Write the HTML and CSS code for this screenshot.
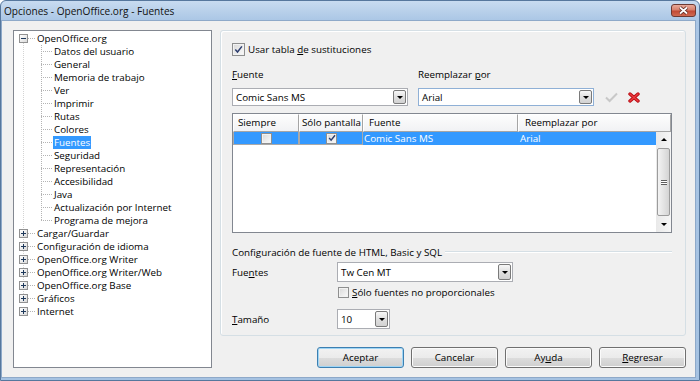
FILE: index.html
```html
<!DOCTYPE html>
<html lang="es">
<head>
    <meta charset="UTF-8">
    <title>Opciones - OpenOffice.org - Fuentes</title>
    <link rel="stylesheet" href="styles.css">
</head>
<body>
    <div class="window">
        <div class="titlebar">
            <span class="title">Opciones - OpenOffice.org - Fuentes</span>
            <span class="close-btn">
                <svg width="11" height="9" viewBox="0 0 11 9"><path d="M2 1.5 L9 7.5 M9 1.5 L2 7.5" stroke="#5a2620" stroke-width="3.4"/><path d="M2 1.5 L9 7.5 M9 1.5 L2 7.5" stroke="#fff" stroke-width="1.7"/></svg>
            </span>
        </div>
        <div class="frame">
            <div class="client">
                <!-- arbol de categorias -->
                <div class="tree">
                    <ul class="tree-list">
                        <li class="node">
                            <div class="node-row"><span class="expander"><span class="sign"></span></span><span class="node-label">OpenOffice.org</span></div>
                            <ul class="children">
                                <li class="child"><span class="node-label">Datos del usuario</span></li>
                                <li class="child"><span class="node-label">General</span></li>
                                <li class="child"><span class="node-label">Memoria de trabajo</span></li>
                                <li class="child"><span class="node-label">Ver</span></li>
                                <li class="child"><span class="node-label">Imprimir</span></li>
                                <li class="child"><span class="node-label">Rutas</span></li>
                                <li class="child"><span class="node-label">Colores</span></li>
                                <li class="child"><span class="node-label selected">Fuentes</span></li>
                                <li class="child"><span class="node-label">Seguridad</span></li>
                                <li class="child"><span class="node-label">Representación</span></li>
                                <li class="child"><span class="node-label">Accesibilidad</span></li>
                                <li class="child"><span class="node-label">Java</span></li>
                                <li class="child"><span class="node-label">Actualización por Internet</span></li>
                                <li class="child"><span class="node-label">Programa de mejora</span></li>
                            </ul>
                        </li>
                        <li class="node"><div class="node-row"><span class="expander"><span class="sign plus"></span></span><span class="node-label">Cargar/Guardar</span></div></li>
                        <li class="node"><div class="node-row"><span class="expander"><span class="sign plus"></span></span><span class="node-label">Configuración de idioma</span></div></li>
                        <li class="node"><div class="node-row"><span class="expander"><span class="sign plus"></span></span><span class="node-label">OpenOffice.org Writer</span></div></li>
                        <li class="node"><div class="node-row"><span class="expander"><span class="sign plus"></span></span><span class="node-label">OpenOffice.org Writer/Web</span></div></li>
                        <li class="node"><div class="node-row"><span class="expander"><span class="sign plus"></span></span><span class="node-label">OpenOffice.org Base</span></div></li>
                        <li class="node"><div class="node-row"><span class="expander"><span class="sign plus"></span></span><span class="node-label">Gráficos</span></div></li>
                        <li class="node"><div class="node-row"><span class="expander"><span class="sign plus"></span></span><span class="node-label">Internet</span></div></li>
                    </ul>
                </div>

                <div class="main">
                    <div class="group">
                        <div class="check-row">
                            <span class="checkbox checked"><svg width="9" height="9" viewBox="0 0 9 9"><path d="M1.3 4.6 L3.5 7 L7.9 1.4" fill="none" stroke="#2c3d6e" stroke-width="1.5"/></svg></span>
                            <span>Usar tabla <u>d</u>e sustituciones</span>
                        </div>

                        <div class="field-labels">
                            <span class="col-label"><u>F</u>uente</span>
                            <span class="col-label">Reemplazar <u>p</u>or</span>
                        </div>

                        <div class="combo-row">
                            <div class="combo wide"><span class="combo-text">Comic Sans MS</span><span class="combo-btn"><span class="arrow-down"></span></span></div>
                            <div class="combo wide focused"><span class="combo-text">Arial</span><span class="combo-btn"><span class="arrow-down"></span></span></div>
                            <span class="tool-icon apply">
                                <svg width="13" height="11" viewBox="0 0 13 11"><path d="M1 5.5 L4.6 9 L12 1.5" fill="none" stroke="#c8c8c8" stroke-width="2"/></svg>
                            </span>
                            <span class="tool-icon">
                                <svg width="12" height="11" viewBox="0 0 12 11"><path d="M2 2 L10 9 M10 2 L2 9" stroke="#b80d14" stroke-width="3.4" stroke-linecap="round"/><path d="M2 2 L10 9 M10 2 L2 9" stroke="#ee3b3f" stroke-width="1.5" stroke-linecap="round"/></svg>
                            </span>
                        </div>

                        <div class="table">
                            <div class="thead">
                                <div class="th c1">Siempre</div>
                                <div class="th c2">Sólo pantalla</div>
                                <div class="th c3">Fuente</div>
                                <div class="th c4">Reemplazar por</div>
                            </div>
                            <div class="tbody">
                                <div class="rows">
                                    <div class="tr selected">
                                        <div class="td c1 boxed"><span class="checkbox small"></span></div>
                                        <div class="td c2 boxed"><span class="checkbox small checked"><svg width="8" height="8" viewBox="0 0 9 9"><path d="M1.3 4.6 L3.5 7 L7.9 1.4" fill="none" stroke="#2c3d6e" stroke-width="1.6"/></svg></span></div>
                                        <div class="td c3">Comic Sans MS</div>
                                        <div class="td c4">Arial</div>
                                    </div>
                                </div>
                                <div class="vscroll">
                                    <span class="sb-btn"><span class="arrow-up"></span></span>
                                    <span class="sb-thumb"><span class="grip"></span></span>
                                    <span class="sb-btn"><span class="arrow-down"></span></span>
                                </div>
                            </div>
                        </div>

                        <div class="section-title">
                            <span>Configuración de fuente de HTML, Basic y SQL</span>
                            <span class="rule"></span>
                        </div>

                        <div class="form-row first">
                            <span class="form-label">Fue<u>n</u>tes</span>
                            <div class="combo tall"><span class="combo-text">Tw Cen MT</span><span class="combo-btn"><span class="arrow-down"></span></span></div>
                        </div>
                        <div class="check-row indent">
                            <span class="checkbox mid"></span>
                            <span><u>S</u>ólo fuentes no proporcionales</span>
                        </div>
                        <div class="form-row size-row">
                            <span class="form-label"><u>T</u>amaño</span>
                            <div class="combo tall narrow"><span class="combo-text">10</span><span class="combo-btn"><span class="arrow-down"></span></span></div>
                        </div>
                    </div>

                    <div class="buttons">
                        <button class="btn default">Aceptar</button>
                        <button class="btn">Cancelar</button>
                        <button class="btn">Ay<u>u</u>da</button>
                        <button class="btn"><u>R</u>egresar</button>
                    </div>
                </div>
            </div>
        </div>
    </div>
</body>
</html>
```

FILE: styles.css
```css
/* reset */
* {
    margin: 0;
    padding: 0;
    box-sizing: border-box;
}

body {
    font-family: "Open Sans", "Noto Sans", sans-serif;
    font-size: 9.8px;
    line-height: 13px;
    color: #000;
    background: #fff;
    overflow: hidden;
}

ul {
    list-style: none;
}

u {
    text-decoration: underline;
    text-underline-offset: 1px;
}

/* ventana */
.window {
    width: 700px;
    height: 381px;
    display: flex;
    flex-direction: column;
    border: 1px solid #56779d;
    border-radius: 6px 6px 0 0;
    background: linear-gradient(#c8dbf0, #aac6e5 20px, #a5c2e2);
}

.titlebar {
    height: 20px;
    display: flex;
    justify-content: space-between;
    align-items: flex-start;
    padding: 0 3px 0 3px;
}

.title {
    margin-top: 3px;
    line-height: 15px;
    font-size: 10.1px;
    color: #111;
}

.close-btn {
    margin-top: 3px;
    width: 25px;
    height: 13px;
    display: flex;
    align-items: center;
    justify-content: center;
    border: 1px solid #6d3a33;
    border-radius: 3px;
    background: linear-gradient(#e9aa9a, #d7806c 45%, #c24a35 55%, #cf6a52);
}

.frame {
    flex: 1;
    display: flex;
    padding: 0 4px 3px 1px;
}

.client {
    flex: 1;
    display: flex;
    gap: 8px;
    padding: 9px 9px 0 11px;
    background: #f0f0f0;
    box-shadow: 0 0 0 1px #8ea9c9;
}

/* arbol */
.tree {
    width: 199px;
    height: 338px;
    padding-top: 1px;
    background: #fff;
    border: 1px solid #828790;
}

.tree-list {
    background: repeating-linear-gradient(to bottom, #d4d4d4 0 1px, transparent 1px 2px) 9px 7px / 1px 260px no-repeat;
}

.node-row {
    display: flex;
    align-items: center;
    height: 13px;
    padding-left: 5px;
    white-space: nowrap;
    background: repeating-linear-gradient(to right, #b4b4b4 0 1px, transparent 1px 2px) 14px 6px / 7px 1px no-repeat;
}

.expander {
    width: 9px;
    height: 9px;
    margin-right: 8px;
    display: flex;
    align-items: center;
    justify-content: center;
    border: 1px solid #919191;
    background: linear-gradient(135deg, #fff, #dadada);
}

.sign {
    width: 5px;
    height: 1px;
    background: #1e395b;
}

.sign.plus {
    background:
        linear-gradient(#1e395b, #1e395b) center / 1px 5px no-repeat,
        linear-gradient(#1e395b, #1e395b) center / 5px 1px no-repeat;
    height: 5px;
}

.node-label {
    padding: 0 1px;
    line-height: 13px;
}

.node-label.selected {
    background: #3399ff;
    color: #fff;
}

.children {
    background: repeating-linear-gradient(to bottom, #b4b4b4 0 1px, transparent 1px 2px) 27px 0 / 1px calc(100% - 6px) no-repeat;
}

.child {
    height: 13px;
    padding-left: 39px;
    white-space: nowrap;
    background: repeating-linear-gradient(to right, #b4b4b4 0 1px, transparent 1px 2px) 27px 6px / 12px 1px no-repeat;
}

/* panel derecho */
.main {
    width: 466px;
    display: flex;
    flex-direction: column;
}

.group {
    height: 306px;
    display: flex;
    flex-direction: column;
    padding: 11px 13px 0 11px;
    border: 1px solid #d5dfe5;
    border-radius: 3px;
    box-shadow: inset 1px 1px 0 #fff;
}

.check-row {
    display: flex;
    align-items: center;
    gap: 3px;
    height: 14px;
}

.check-row.indent {
    margin-top: 3px;
    padding-left: 106px;
}

.checkbox {
    flex: none;
    width: 13px;
    height: 13px;
    display: flex;
    align-items: center;
    justify-content: center;
    border: 1px solid #8e8f8f;
    background: linear-gradient(135deg, #d8d8d8, #fbfbfb);
    box-shadow: inset 0 0 0 1px #f2f2f2;
}

.checkbox.mid {
    width: 11px;
    height: 11px;
}

.checkbox.small {
    width: 11px;
    height: 11px;
}

.field-labels {
    display: flex;
    gap: 10px;
    margin-top: 11px;
    height: 14px;
    align-items: center;
}

.col-label {
    width: 176px;
}

.combo-row {
    display: flex;
    align-items: center;
    gap: 10px;
    margin-top: 7px;
    height: 18px;
}

.combo {
    height: 18px;
    display: flex;
    align-items: center;
    padding: 0 1px 0 3px;
    background: #fff;
    border: 1px solid #abadb3;
}

.combo.wide {
    width: 176px;
}

.combo.focused {
    border-color: #8fb0d6;
}

.combo.tall {
    width: 176px;
    height: 20px;
}

.combo.narrow {
    width: 53px;
}

.combo-text {
    flex: 1;
    white-space: nowrap;
}

.combo-btn {
    width: 13px;
    height: 14px;
    display: flex;
    align-items: center;
    justify-content: center;
    border: 1px solid #7a7a7a;
    border-radius: 2px;
    background: linear-gradient(#f7f7f7, #e0e0e0 50%, #d2d2d2);
}

.combo.tall .combo-btn {
    height: 16px;
}

.arrow-down {
    width: 0;
    height: 0;
    border-left: 3px solid transparent;
    border-right: 3px solid transparent;
    border-top: 3px solid #000;
}

.arrow-up {
    width: 0;
    height: 0;
    border-left: 3px solid transparent;
    border-right: 3px solid transparent;
    border-bottom: 3px solid #000;
}

.tool-icon {
    display: flex;
    align-items: center;
}

.tool-icon.apply {
    margin-left: 1px;
}

/* tabla de sustituciones */
.table {
    margin-top: 7px;
    height: 120px;
    display: flex;
    flex-direction: column;
    background: #fff;
    border: 1px solid #828790;
}

.thead {
    display: flex;
    height: 18px;
}

.th {
    line-height: 16px;
    white-space: nowrap;
    overflow: hidden;
    padding-left: 4px;
    background: linear-gradient(#fdfdfd, #f1f2f4);
    border: 1px solid #a5a5a5;
    border-color: #fff #a5a5a5 #a5a5a5 #fff;
}

.c1 { width: 66px; }
.c2 { width: 64px; }
.c3 { width: 155px; }
.c4 { width: 153px; }

.th.c2 { padding-left: 2px; }
.th.c3 { padding-left: 5px; }
.th.c4 { padding-left: 6px; }

.tbody {
    flex: 1;
    display: flex;
}

.rows {
    flex: 1;
}

.tr {
    display: flex;
    height: 13px;
}

.tr.selected {
    background: #3399ff;
    color: #fff;
}

.td {
    line-height: 13px;
    white-space: nowrap;
    padding-left: 1px;
}

.td.boxed {
    display: flex;
    align-items: center;
    justify-content: center;
    border: 1px solid #a9a9a9;
    border-top: none;
}

.td.c4 {
    width: auto;
    flex: 1;
    padding-left: 2px;
}

.vscroll {
    width: 15px;
    display: flex;
    flex-direction: column;
    background: linear-gradient(to right, #e9e9e9, #f6f6f6);
}

.sb-btn {
    height: 15px;
    display: flex;
    align-items: center;
    justify-content: center;
}

.sb-thumb {
    flex: 1;
    margin: 1px 1px;
    display: flex;
    align-items: center;
    justify-content: center;
    border: 1px solid #9c9c9c;
    border-radius: 2px;
    background: linear-gradient(to right, #f3f3f3, #e4e4e4 50%, #d4d4d4);
}

.grip {
    width: 6px;
    height: 5px;
    background: repeating-linear-gradient(to bottom, #5e5e5e 0 1px, #fff 1px 2px);
}

/* configuracion html */
.section-title {
    display: flex;
    align-items: center;
    gap: 3px;
    height: 14px;
    margin-top: 12px;
    white-space: nowrap;
}

.rule {
    flex: 1;
    height: 2px;
    border-top: 1px solid #d5dfe5;
    border-bottom: 1px solid #fff;
}

.form-row {
    display: flex;
    align-items: center;
}

.form-row.first {
    margin-top: 3px;
}

.form-row.size-row {
    margin-top: 10px;
}

.form-label {
    width: 105px;
}

/* botones */
.buttons {
    display: flex;
    justify-content: flex-end;
    gap: 7px;
    margin-top: 11px;
}

.btn {
    width: 87px;
    height: 21px;
    font: inherit;
    color: #000;
    border: 1px solid #707070;
    border-radius: 3px;
    background: linear-gradient(#f2f2f2, #ebebeb 50%, #dddddd 51%, #cfcfcf);
    box-shadow: inset 0 0 0 1px #fbfbfb;
}

.btn.default {
    border-color: #3c7fb1;
    box-shadow: inset 0 0 0 1px #9fd5f5;
}
```
